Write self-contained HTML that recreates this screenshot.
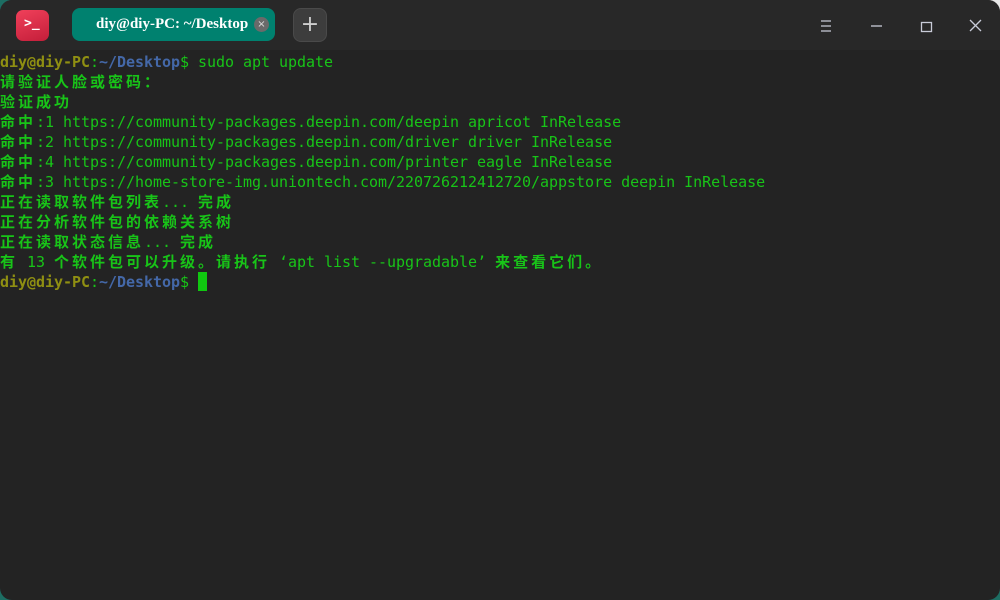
<!DOCTYPE html>
<html><head><meta charset="utf-8"><style>
html,body{margin:0;padding:0;width:1000px;height:600px;overflow:hidden;background:#1d6e63;}
#tr{position:absolute;right:0;top:0;width:30px;height:30px;background:#e8e8e8;}
#win{position:absolute;left:0;top:0;width:1000px;height:600px;border-radius:12px;overflow:hidden;background:#232323;}
#tb{position:absolute;left:0;top:0;width:1000px;height:50px;background:#282828;}
#icon{position:absolute;left:16px;top:10px;width:33px;height:31px;border-radius:7px;background:linear-gradient(160deg,#f0405a,#c41e3a);}
#icon span{position:absolute;left:8px;top:6px;color:#fff;font:bold 13px "DejaVu Sans Mono",monospace;}
#tab{position:absolute;left:72px;top:8px;width:203px;height:33px;border-radius:8px;background:#00816f;}
#tab .t{position:absolute;left:24px;top:8px;color:#fff;font:bold 15px "Liberation Serif",serif;}
#tab .x{position:absolute;left:182px;top:9px;width:15px;height:15px;border-radius:50%;background:#6a6a6a;color:#ddd;font:10px "DejaVu Sans",sans-serif;text-align:center;line-height:15px;}
#plus{position:absolute;left:293px;top:8px;width:32px;height:32px;border-radius:8px;background:#3d3d3d;border:1px solid #4a4a4a;color:#cfcfcf;font:22px "DejaVu Sans",sans-serif;text-align:center;line-height:31px;}
#term{position:absolute;left:0;top:52px;font-family:"DejaVu Sans Mono","Noto Sans CJK SC",monospace;font-size:15px;line-height:20px;color:#18c418;white-space:pre;letter-spacing:-0.03px;}
.c{letter-spacing:3px;font-weight:bold;font-family:"Noto Sans CJK SC",sans-serif;}
.u{color:#8f8f12;font-weight:bold}.p{color:#4468a8;font-weight:bold}
.q{display:inline-block;width:18px;text-align:right;}
.q2{display:inline-block;width:18px;text-align:left;}
.cur{display:inline-block;width:9px;height:19px;background:#10c810;vertical-align:-4px;}
</style></head><body><div id="tr"></div>
<div id="win">
<div id="tb">
<div id="icon"><span>&gt;_</span></div>
<div id="tab"><span class="t">diy@diy-PC: ~/Desktop</span><span class="x">×</span></div>
<div id="plus">+</div>
<svg style="position:absolute;left:780px;top:0" width="220" height="50" stroke="#c8cbd8" stroke-width="1.3" fill="none">
<path d="M41 21h10M41 26h10M41 31h10"/>
<path d="M91 26h11"/>
<rect x="141.5" y="22.5" width="10" height="9"/>
<path d="M190 20l11 11M201 20l-11 11"/>
</svg>
</div>
<div id="term"><span class="u">diy@diy-PC</span>:<span class="p">~/Desktop</span>$ sudo apt update
<span class="c">请验证人脸或密码：</span>
<span class="c">验证成功</span>
<span class="c">命中</span>:1 https://community-packages.deepin.com/deepin apricot InRelease
<span class="c">命中</span>:2 https://community-packages.deepin.com/driver driver InRelease
<span class="c">命中</span>:4 https://community-packages.deepin.com/printer eagle InRelease
<span class="c">命中</span>:3 https://home-store-img.uniontech.com/220726212412720/appstore deepin InRelease
<span class="c">正在读取软件包列表</span>... <span class="c">完成</span>
<span class="c">正在分析软件包的依赖关系树</span>
<span class="c">正在读取状态信息</span>... <span class="c">完成</span>
<span class="c">有</span> 13 <span class="c">个软件包可以升级。请执行</span><span class="q">‘</span>apt list --upgradable<span class="q2">’</span><span class="c">来查看它们。</span>
<span class="u">diy@diy-PC</span>:<span class="p">~/Desktop</span>$ <span class="cur"></span></div>
</div>
</body></html>
